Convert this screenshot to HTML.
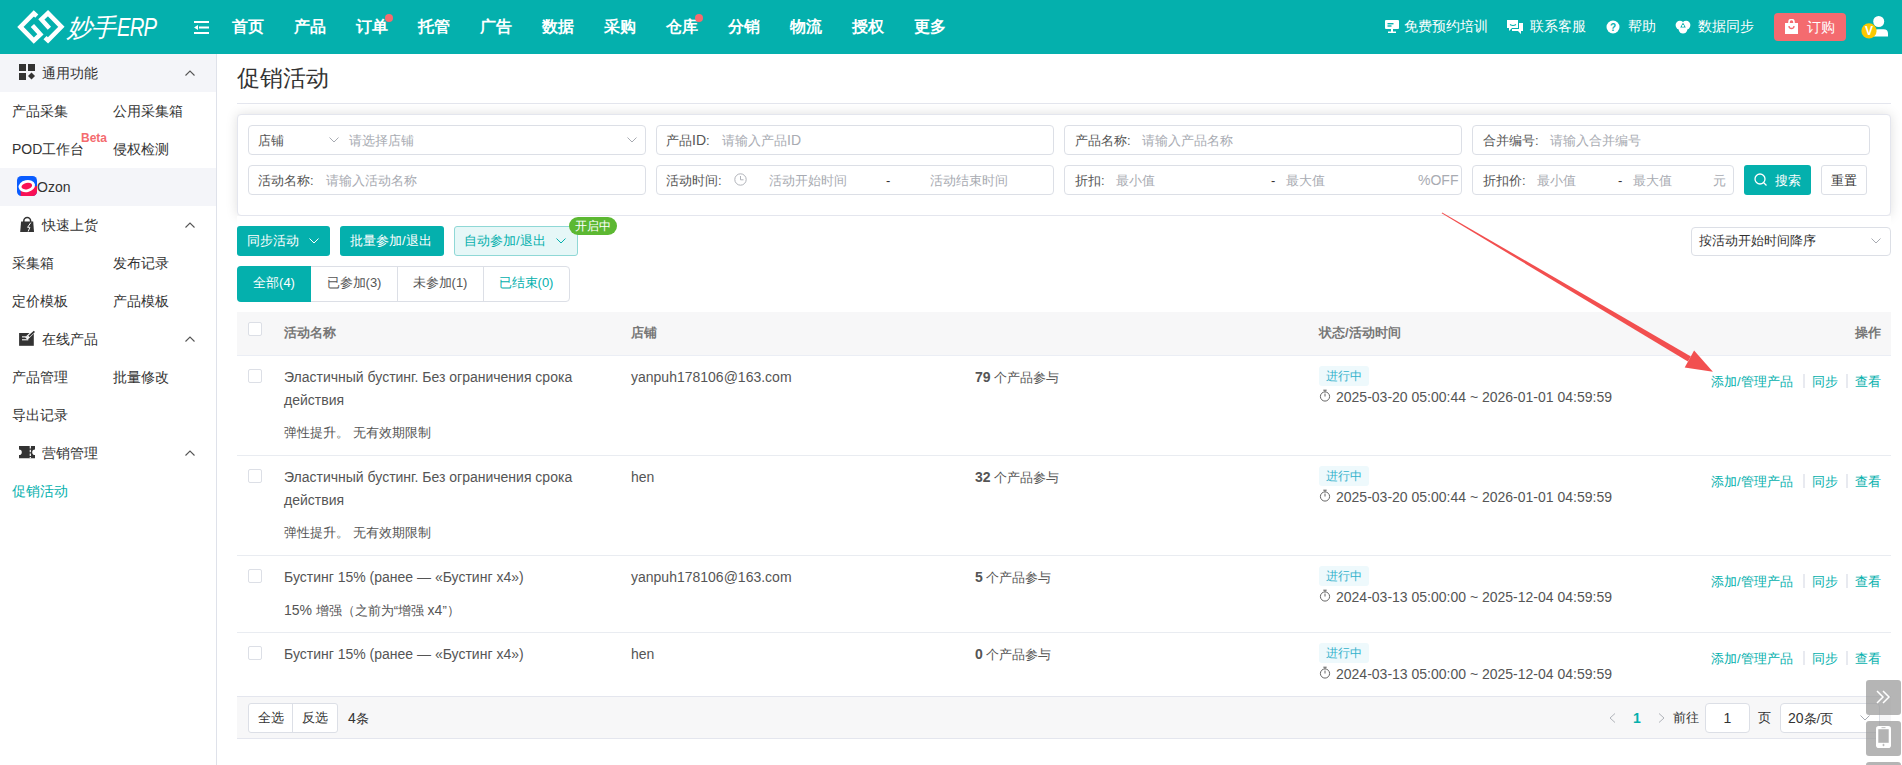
<!DOCTYPE html>
<html><head><meta charset="utf-8">
<style>
*{box-sizing:border-box;margin:0;padding:0}
html,body{width:1902px;height:765px;overflow:hidden;background:#fff}
body{position:relative;font-family:"Liberation Sans",sans-serif;font-size:13px;color:#333}
.a{position:absolute;white-space:nowrap}
body .L{font-size:14px}
#hdr{position:absolute;left:0;top:0;width:1902px;height:54px;background:#04b0ad}
.nav{position:absolute;top:1px;height:54px;line-height:52px;font-size:16px;font-weight:bold;color:#fff}
.dot{position:absolute;width:8px;height:8px;border-radius:50%;background:#f46b6f}
.hr{position:absolute;top:0;height:54px;line-height:53px;font-size:14px;color:#fff}
#side{position:absolute;left:0;top:54px;width:217px;height:711px;background:#fff;border-right:1px solid #dfe2ea}
.sec{position:absolute;left:0;width:216px;height:38px}
.gray{background:#f4f5f9}
.si{position:absolute;font-size:14px;line-height:38px;color:#333}
.chev{position:absolute;left:185px;width:10px;height:6px}
.inp{position:absolute;height:30px;border:1px solid #dcdfe6;border-radius:4px;background:#fff}
.lb{position:absolute;white-space:nowrap;line-height:31px;font-size:13px;color:#555}
.ph{position:absolute;white-space:nowrap;line-height:31px;font-size:13px;color:#a8abb2}
.chv{position:absolute;width:10px;height:6px;fill:none;stroke:#a8abb2;stroke-width:1}
.bt{position:absolute;white-space:nowrap;line-height:30px;font-size:13px}
.tb{position:absolute;top:266px;height:36px;line-height:34px;text-align:center;font-size:13px;color:#555}
.cb{position:absolute;width:14px;height:14px;border:1px solid #dcdfe6;border-radius:2px;background:#fff}
.th{position:absolute;top:311px;line-height:44px;font-size:13px;font-weight:bold;color:#777;white-space:nowrap}
.td{position:absolute;line-height:20px;font-size:13px;color:#555;white-space:nowrap}
.tag{position:absolute;width:50px;height:20px;line-height:20px;text-align:center;font-size:12px;color:#35b2cc;background:#eef9fc;border-radius:3px}
.op{position:absolute;line-height:21px;font-size:13px;color:#04b0ad;white-space:nowrap}
.sep{position:absolute;width:2px;height:14px;background:#e8eaf0}
</style></head><body>
<div id="hdr">
  <svg class="a" style="left:0;top:0" width="70" height="54" viewBox="0 0 70 54">
    <g fill="none" stroke="#fff" stroke-width="4.5" stroke-linejoin="miter" stroke-linecap="butt">
      <path id="lg" d="M36.8 16.2 L33.8 13.4 L20.4 26.9 L33.8 40.6 L40.4 34.3 L32.4 25.5"/>
      <path d="M36.8 16.2 L33.8 13.4 L20.4 26.9 L33.8 40.6 L40.4 34.3 L32.4 25.5" transform="rotate(180 40.9 26.87)"/>
    </g>
  </svg>
  <div class="a" style="left:67px;top:0;line-height:54px;font-size:25px;color:#fff;font-style:italic;letter-spacing:-1px">妙手<span style="font-size:26px;display:inline-block;margin-left:2px;transform:scaleX(0.78);transform-origin:0 50%">ERP</span></div>
  <svg class="a" style="left:194px;top:21px" width="16" height="14" viewBox="0 0 16 14">
    <g fill="#fff"><rect x="0" y="0" width="15" height="2"/><rect x="5" y="5.5" width="10" height="2"/><rect x="0" y="11" width="15" height="2"/><path d="M0 6.5 L4 4 L4 9 Z"/></g>
  </svg>
  <div class="nav" style="left:232px">首页</div>
  <div class="nav" style="left:294px">产品</div>
  <div class="nav" style="left:356px">订单</div><div class="dot" style="left:385px;top:14px"></div>
  <div class="nav" style="left:418px">托管</div>
  <div class="nav" style="left:480px">广告</div>
  <div class="nav" style="left:542px">数据</div>
  <div class="nav" style="left:604px">采购</div>
  <div class="nav" style="left:666px">仓库</div><div class="dot" style="left:695px;top:14px"></div>
  <div class="nav" style="left:728px">分销</div>
  <div class="nav" style="left:790px">物流</div>
  <div class="nav" style="left:852px">授权</div>
  <div class="nav" style="left:914px">更多</div>

  <!-- right header -->
  <svg class="a" style="left:1385px;top:20px" width="15" height="13" viewBox="0 0 15 13"><g fill="#fff"><rect x="0" y="0" width="14" height="9" rx="1"/><rect x="6" y="9" width="2" height="3"/><rect x="3" y="11.5" width="8" height="1.5"/></g><rect x="2.5" y="3" width="6" height="1.4" fill="#04b0ad"/><rect x="2.5" y="5.3" width="4" height="1.4" fill="#04b0ad"/></svg>
  <div class="hr" style="left:1404px">免费预约培训</div>
  <svg class="a" style="left:1507px;top:19px" width="16" height="15" viewBox="0 0 16 15"><g fill="#fff"><path d="M0 1 h11 v8 h-6 l-3 3 v-3 h-2z"/><path d="M12 4 h4 v8 h-2 v3 l-3 -3 h-6 v-2 h7z"/></g><path d="M3 5.5 q3 2 6 0" stroke="#04b0ad" stroke-width="1.2" fill="none"/></svg>
  <div class="hr" style="left:1530px">联系客服</div>
  <svg class="a" style="left:1606px;top:20px" width="14" height="14" viewBox="0 0 14 14"><circle cx="7" cy="7" r="6.5" fill="#fff"/><text x="7" y="11" font-size="10" font-weight="bold" text-anchor="middle" fill="#04b0ad" font-family="Liberation Sans">?</text></svg>
  <div class="hr" style="left:1628px">帮助</div>
  <svg class="a" style="left:1675px;top:19px" width="16" height="15" viewBox="0 0 16 15"><g fill="#fff"><circle cx="4.9" cy="6.1" r="4.3"/><circle cx="11.1" cy="6.1" r="4.3"/><circle cx="8" cy="10.3" r="4.3"/></g><path d="M8 3.6 L5.2 8.6 H10.8 Z" fill="#04b0ad"/><circle cx="8" cy="6.9" r="1.1" fill="#fff"/></svg>
  <div class="hr" style="left:1698px">数据同步</div>
  <div class="a" style="left:1774px;top:13px;width:72px;height:28px;border-radius:4px;background:#f46b6f"></div>
  <svg class="a" style="left:1785px;top:19px" width="13" height="15" viewBox="0 0 13 15"><path d="M0 4 h13 v11 h-13z" fill="#fff"/><path d="M4 6 v-3 a2.5 2.5 0 0 1 5 0 v3" stroke="#fff" stroke-width="1.6" fill="none"/><path d="M4 7 a2.5 2.5 0 0 0 5 0" stroke="#f46b6f" stroke-width="1.3" fill="none"/></svg>
  <div class="hr" style="left:1807px;top:1px">订购</div>
  <svg class="a" style="left:1858px;top:14px" width="34" height="28" viewBox="0 0 34 28"><circle cx="20.7" cy="7.5" r="5.5" fill="#fff"/><path d="M15.5 22.5 V19.5 Q15.5 15.2 20 15.2 H25.5 Q30 15.2 30 19.5 V22.5 Z" fill="#fff"/><circle cx="11" cy="16.9" r="7.6" fill="#fcc800"/><text x="11" y="21.3" font-size="12" font-weight="bold" text-anchor="middle" fill="#fff" font-family="Liberation Sans">V</text></svg>
</div>

<div id="side">
  <div class="sec gray" style="top:0"></div>
  <div class="sec gray" style="top:114px"></div>
  <!-- icons -->
  <svg class="a" style="left:19px;top:10px" width="16" height="16" viewBox="0 0 16 16"><g fill="#333"><rect x="0" y="0" width="7" height="7"/><rect x="9" y="0" width="7" height="7"/><rect x="0" y="9" width="7" height="7"/><path d="M12.5 8.5 L16 12 L12.5 15.5 L9 12Z"/></g></svg>
  <div class="si" style="left:42px;top:0">通用功能</div>
  <svg class="chev" style="top:16px" viewBox="0 0 10 6"><path d="M0.5 5.5 L5 1 L9.5 5.5" stroke="#555" stroke-width="1.1" fill="none"/></svg>
  <div class="si" style="left:12px;top:38px">产品采集</div>
  <div class="si" style="left:113px;top:38px">公用采集箱</div>
  <div class="si" style="left:12px;top:76px">POD工作台</div>
  <div class="a" style="left:81px;top:77px;font-size:12px;line-height:14px;font-weight:bold;color:#f46b6f">Beta</div>
  <div class="si" style="left:113px;top:76px">侵权检测</div>
  <svg class="a" style="left:17px;top:122px" width="20" height="20" viewBox="0 0 20 20"><rect x="0" y="0" width="20" height="20" rx="4.5" fill="#0a5cff"/><path d="M3.7 12.5 L20 10 L20 15.5 A4.5 4.5 0 0 1 15.5 20 L3.7 20 Z" fill="#f91155"/><ellipse cx="9.8" cy="10.1" rx="8.3" ry="6" transform="rotate(-12 9.8 10.1)" fill="#fff"/><ellipse cx="9.8" cy="10.1" rx="5.4" ry="3.2" transform="rotate(-12 9.8 10.1)" fill="#f91155"/></svg>
  <div class="si" style="left:37px;top:114px">Ozon</div>

  <svg class="a" style="left:20px;top:162px" width="15" height="17" viewBox="0 0 15 17"><path d="M3.8 6 V5 A3.4 3.4 0 0 1 10.6 5 V6" stroke="#333" stroke-width="1.5" fill="none"/><path d="M1.1 5.5 H13.2 L14 16 H0.2 Z" fill="#333"/><path d="M10.8 6.6 L7.6 11.3 H9.9 L8.2 15.5" stroke="#fff" stroke-width="1" fill="none"/></svg>
  <div class="si" style="left:42px;top:152px">快速上货</div>
  <svg class="chev" style="top:168px" viewBox="0 0 10 6"><path d="M0.5 5.5 L5 1 L9.5 5.5" stroke="#555" stroke-width="1.1" fill="none"/></svg>
  <div class="si" style="left:12px;top:190px">采集箱</div>
  <div class="si" style="left:113px;top:190px">发布记录</div>
  <div class="si" style="left:12px;top:228px">定价模板</div>
  <div class="si" style="left:113px;top:228px">产品模板</div>

  <svg class="a" style="left:19px;top:276px" width="17" height="17" viewBox="0 0 17 17"><rect x="0.1" y="3" width="14.7" height="12.8" fill="#333"/><path d="M7.3 8.5 L16.5 -0.5" stroke="#fff" stroke-width="3.4"/><path d="M9.9 6.4 L15.4 1.3" stroke="#333" stroke-width="1.8"/><rect x="3" y="6.2" width="6.5" height="1.3" fill="#ddd"/><rect x="3" y="9.1" width="6.3" height="1.3" fill="#ddd"/></svg>
  <div class="si" style="left:42px;top:266px">在线产品</div>
  <svg class="chev" style="top:282px" viewBox="0 0 10 6"><path d="M0.5 5.5 L5 1 L9.5 5.5" stroke="#555" stroke-width="1.1" fill="none"/></svg>
  <div class="si" style="left:12px;top:304px">产品管理</div>
  <div class="si" style="left:113px;top:304px">批量修改</div>
  <div class="si" style="left:12px;top:342px">导出记录</div>

  <svg class="a" style="left:19px;top:392px" width="16" height="13" viewBox="0 0 16 13"><path d="M0 0 H16 V3.4 A2.8 2.8 0 0 0 16 9 V12.3 H0 V9 A2.8 2.8 0 0 0 0 3.4 Z" fill="#333"/><path d="M11.3 0 V12.3" stroke="#fff" stroke-width="1.2" stroke-dasharray="2.6 1.1"/></svg>
  <div class="si" style="left:42px;top:380px">营销管理</div>
  <svg class="chev" style="top:396px" viewBox="0 0 10 6"><path d="M0.5 5.5 L5 1 L9.5 5.5" stroke="#555" stroke-width="1.1" fill="none"/></svg>
  <div class="si" style="left:12px;top:418px;color:#04b0ad">促销活动</div>
</div>

<div id="main">
  <div class="a" style="left:237px;top:62px;font-size:23px;line-height:32px;color:#333">促销活动</div>
  <div class="a" style="left:237px;top:103px;width:1654px;height:1px;background:#e4e6ee"></div>
  <!-- search card -->
  <div class="a" style="left:237px;top:114px;width:1654px;height:102px;border:1px solid #e4e6ee;border-radius:4px;background:#fff;box-shadow:0 0 12px rgba(0,0,0,0.13)"></div>
  <div class="a" style="left:237px;top:216px;width:1654px;height:95px;background:#fff"></div>
  <div class="inp" style="left:248px;top:125px;width:398px"></div>
  <div class="inp" style="left:656px;top:125px;width:398px"></div>
  <div class="inp" style="left:1064px;top:125px;width:398px"></div>
  <div class="inp" style="left:1472px;top:125px;width:398px"></div>
  <div class="inp" style="left:248px;top:165px;width:398px"></div>
  <div class="inp" style="left:656px;top:165px;width:398px"></div>
  <div class="inp" style="left:1064px;top:165px;width:398px"></div>
  <div class="inp" style="left:1472px;top:165px;width:262px"></div>
  <div class="lb" style="left:258px;top:125px">店铺</div>
  <svg class="chv" style="left:329px;top:137px"><path d="M0.5 0.5 L5 5 L9.5 0.5"/></svg>
  <div class="ph" style="left:349px;top:125px">请选择店铺</div>
  <svg class="chv" style="left:627px;top:137px"><path d="M0.5 0.5 L5 5 L9.5 0.5"/></svg>
  <div class="lb" style="left:666px;top:125px">产品<span class="L">ID</span>:</div>
  <div class="ph" style="left:722px;top:125px">请输入产品<span class="L">ID</span></div>
  <div class="lb" style="left:1075px;top:125px">产品名称:</div>
  <div class="ph" style="left:1142px;top:125px">请输入产品名称</div>
  <div class="lb" style="left:1483px;top:125px">合并编号:</div>
  <div class="ph" style="left:1550px;top:125px">请输入合并编号</div>
  <div class="lb" style="left:258px;top:165px">活动名称:</div>
  <div class="ph" style="left:326px;top:165px">请输入活动名称</div>
  <div class="lb" style="left:666px;top:165px">活动时间:</div>
  <svg class="a" style="left:734px;top:173px" width="13" height="13" viewBox="0 0 13 13"><circle cx="6.5" cy="6.5" r="5.7" fill="none" stroke="#b0b3b9" stroke-width="1"/><path d="M6.5 3 V6.8 H9.5" fill="none" stroke="#b0b3b9" stroke-width="1"/></svg>
  <div class="ph" style="left:769px;top:165px">活动开始时间</div>
  <div class="lb" style="left:886px;top:165px;color:#333">-</div>
  <div class="ph" style="left:930px;top:165px">活动结束时间</div>
  <div class="lb" style="left:1075px;top:165px">折扣:</div>
  <div class="ph" style="left:1116px;top:165px">最小值</div>
  <div class="lb" style="left:1271px;top:165px;color:#333">-</div>
  <div class="ph" style="left:1286px;top:165px">最大值</div>
  <div class="ph" style="left:1418px;top:165px"><span class="L">%OFF</span></div>
  <div class="lb" style="left:1483px;top:165px">折扣价:</div>
  <div class="ph" style="left:1537px;top:165px">最小值</div>
  <div class="lb" style="left:1618px;top:165px;color:#333">-</div>
  <div class="ph" style="left:1633px;top:165px">最大值</div>
  <div class="ph" style="left:1713px;top:165px">元</div>
  <div class="a" style="left:1744px;top:165px;width:67px;height:30px;border-radius:3px;background:#04b0ad"></div>
  <svg class="a" style="left:1754px;top:173px" width="14" height="14" viewBox="0 0 14 14"><circle cx="6" cy="6" r="5" fill="none" stroke="#fff" stroke-width="1.3"/><path d="M9.5 9.5 L12.5 12.5" stroke="#fff" stroke-width="1.3"/></svg>
  <div class="lb" style="left:1775px;top:165px;color:#fff">搜索</div>
  <div class="a" style="left:1821px;top:165px;width:46px;height:30px;border-radius:3px;border:1px solid #dcdfe6;background:#fff"></div>
  <div class="lb" style="left:1831px;top:165px;color:#333">重置</div>

  <!-- buttons -->
  <div class="a" style="left:237px;top:226px;width:93px;height:30px;border-radius:3px;background:#04b0ad"></div>
  <div class="bt" style="left:247px;top:226px;color:#fff">同步活动</div>
  <svg class="chv" style="left:309px;top:238px;stroke:#fff"><path d="M0.5 0.5 L5 5 L9.5 0.5"/></svg>
  <div class="a" style="left:340px;top:226px;width:104px;height:30px;border-radius:3px;background:#04b0ad"></div>
  <div class="bt" style="left:350px;top:226px;color:#fff">批量参加/退出</div>
  <div class="a" style="left:454px;top:226px;width:124px;height:30px;border-radius:3px;background:#e6f7f7;border:1px solid #8fd8d6"></div>
  <div class="bt" style="left:464px;top:226px;color:#04b0ad">自动参加/退出</div>
  <svg class="chv" style="left:556px;top:238px;stroke:#04b0ad"><path d="M0.5 0.5 L5 5 L9.5 0.5"/></svg>
  <div class="a" style="left:569px;top:217px;width:48px;height:18px;border-radius:9px;background:#5cb832;color:#fff;font-size:12px;line-height:18px;text-align:center">开启中</div>
  <div class="a" style="left:1691px;top:227px;width:200px;height:29px;border-radius:4px;border:1px solid #dcdfe6"></div>
  <div class="bt" style="left:1699px;top:226px;color:#333">按活动开始时间降序</div>
  <svg class="chv" style="left:1871px;top:238px"><path d="M0.5 0.5 L5 5 L9.5 0.5"/></svg>

  <!-- tabs -->
  <div class="a" style="left:237px;top:266px;width:333px;height:36px;border:1px solid #dcdfe6;border-radius:4px"></div>
  <div class="a" style="left:237px;top:266px;width:74px;height:36px;background:#04b0ad;border-radius:4px 0 0 4px"></div>
  <div class="a" style="left:397px;top:266px;width:1px;height:36px;background:#dcdfe6"></div>
  <div class="a" style="left:483px;top:266px;width:1px;height:36px;background:#dcdfe6"></div>
  <div class="tb" style="left:237px;width:74px;color:#fff">全部(4)</div>
  <div class="tb" style="left:311px;width:86px">已参加(3)</div>
  <div class="tb" style="left:397px;width:86px">未参加(1)</div>
  <div class="tb" style="left:483px;width:86px;color:#04b0ad">已结束(0)</div>

  <!-- table -->
  <div class="a" style="left:237px;top:312px;width:1654px;height:44px;background:#f7f7f8;border-bottom:1px solid #ebeef5"></div>
  <div class="cb" style="left:248px;top:322px"></div>
  <div class="th" style="left:284px">活动名称</div>
  <div class="th" style="left:631px">店铺</div>
  <div class="th" style="left:1319px">状态/活动时间</div>
  <div class="th" style="left:1855px">操作</div>
  <div class="a" style="left:237px;top:455px;width:1654px;height:1px;background:#e9ecf1"></div>
  <div class="cb" style="left:248px;top:369px"></div>
  <div class="td L" style="left:284px;top:367px">Эластичный бустинг. Без ограничения срока</div>
  <div class="td L" style="left:284px;top:390px">действия</div>
  <div class="td" style="left:284px;top:423px">弹性提升。 无有效期限制</div>
  <div class="td L" style="left:631px;top:367px">yanpuh178106@163.com</div>
  <div class="td" style="left:975px;top:367px"><b class="L">79</b> 个产品参与</div>
  <div class="tag" style="left:1319px;top:366px">进行中</div>
  <svg class="a" style="left:1319px;top:389px" width="12" height="13" viewBox="0 0 12 13"><circle cx="6" cy="7.5" r="4.6" fill="none" stroke="#666" stroke-width="1"/><path d="M4.3 1.2 H7.7 M6 1.2 V2.9 M6 7.5 V4.6" stroke="#666" stroke-width="1"/></svg>
  <div class="td L" style="left:1336px;top:387px">2025-03-20 05:00:44 ~ 2026-01-01 04:59:59</div>
  <div class="op" style="left:1711px;top:371px">添加/管理产品</div><div class="sep" style="left:1803px;top:374px"></div><div class="op" style="left:1812px;top:371px">同步</div><div class="sep" style="left:1846px;top:374px"></div><div class="op" style="left:1855px;top:371px">查看</div>
  <div class="a" style="left:237px;top:555px;width:1654px;height:1px;background:#e9ecf1"></div>
  <div class="cb" style="left:248px;top:469px"></div>
  <div class="td L" style="left:284px;top:467px">Эластичный бустинг. Без ограничения срока</div>
  <div class="td L" style="left:284px;top:490px">действия</div>
  <div class="td" style="left:284px;top:523px">弹性提升。 无有效期限制</div>
  <div class="td L" style="left:631px;top:467px">hen</div>
  <div class="td" style="left:975px;top:467px"><b class="L">32</b> 个产品参与</div>
  <div class="tag" style="left:1319px;top:466px">进行中</div>
  <svg class="a" style="left:1319px;top:489px" width="12" height="13" viewBox="0 0 12 13"><circle cx="6" cy="7.5" r="4.6" fill="none" stroke="#666" stroke-width="1"/><path d="M4.3 1.2 H7.7 M6 1.2 V2.9 M6 7.5 V4.6" stroke="#666" stroke-width="1"/></svg>
  <div class="td L" style="left:1336px;top:487px">2025-03-20 05:00:44 ~ 2026-01-01 04:59:59</div>
  <div class="op" style="left:1711px;top:471px">添加/管理产品</div><div class="sep" style="left:1803px;top:474px"></div><div class="op" style="left:1812px;top:471px">同步</div><div class="sep" style="left:1846px;top:474px"></div><div class="op" style="left:1855px;top:471px">查看</div>
  <div class="a" style="left:237px;top:632px;width:1654px;height:1px;background:#e9ecf1"></div>
  <div class="cb" style="left:248px;top:569px"></div>
  <div class="td L" style="left:284px;top:567px">Бустинг 15% (ранее — «Бустинг x4»)</div>
  <div class="td" style="left:284px;top:600px"><span class="L">15%</span> 增强（之前为“增强 <span class="L">x4</span>”）</div>
  <div class="td L" style="left:631px;top:567px">yanpuh178106@163.com</div>
  <div class="td" style="left:975px;top:567px"><b class="L">5</b> 个产品参与</div>
  <div class="tag" style="left:1319px;top:566px">进行中</div>
  <svg class="a" style="left:1319px;top:589px" width="12" height="13" viewBox="0 0 12 13"><circle cx="6" cy="7.5" r="4.6" fill="none" stroke="#666" stroke-width="1"/><path d="M4.3 1.2 H7.7 M6 1.2 V2.9 M6 7.5 V4.6" stroke="#666" stroke-width="1"/></svg>
  <div class="td L" style="left:1336px;top:587px">2024-03-13 05:00:00 ~ 2025-12-04 04:59:59</div>
  <div class="op" style="left:1711px;top:571px">添加/管理产品</div><div class="sep" style="left:1803px;top:574px"></div><div class="op" style="left:1812px;top:571px">同步</div><div class="sep" style="left:1846px;top:574px"></div><div class="op" style="left:1855px;top:571px">查看</div>
  <div class="a" style="left:237px;top:696px;width:1654px;height:1px;background:#e9ecf1"></div>
  <div class="cb" style="left:248px;top:646px"></div>
  <div class="td L" style="left:284px;top:644px">Бустинг 15% (ранее — «Бустинг x4»)</div>
  <div class="td L" style="left:631px;top:644px">hen</div>
  <div class="td" style="left:975px;top:644px"><b class="L">0</b> 个产品参与</div>
  <div class="tag" style="left:1319px;top:643px">进行中</div>
  <svg class="a" style="left:1319px;top:666px" width="12" height="13" viewBox="0 0 12 13"><circle cx="6" cy="7.5" r="4.6" fill="none" stroke="#666" stroke-width="1"/><path d="M4.3 1.2 H7.7 M6 1.2 V2.9 M6 7.5 V4.6" stroke="#666" stroke-width="1"/></svg>
  <div class="td L" style="left:1336px;top:664px">2024-03-13 05:00:00 ~ 2025-12-04 04:59:59</div>
  <div class="op" style="left:1711px;top:648px">添加/管理产品</div><div class="sep" style="left:1803px;top:651px"></div><div class="op" style="left:1812px;top:648px">同步</div><div class="sep" style="left:1846px;top:651px"></div><div class="op" style="left:1855px;top:648px">查看</div>

  <!-- footer -->
  <div class="a" style="left:237px;top:696px;width:1654px;height:43px;background:#f7f7f8;border-top:1px solid #e4e6ee;border-bottom:1px solid #e4e6ee"></div>
  <div class="a" style="left:248px;top:703px;width:90px;height:30px;border:1px solid #dcdfe6;border-radius:3px;background:#fff"></div>
  <div class="a" style="left:292px;top:703px;width:1px;height:30px;background:#dcdfe6"></div>
  <div class="bt" style="left:258px;top:703px">全选</div>
  <div class="bt" style="left:302px;top:703px">反选</div>
  <div class="bt" style="left:348px;top:703px"><span class="L">4</span>条</div>
  <svg class="a" style="left:1609px;top:713px" width="7" height="10" viewBox="0 0 7 10"><path d="M6 0.5 L1 5 L6 9.5" fill="none" stroke="#b0b3b9" stroke-width="1"/></svg>
  <div class="bt" style="left:1633px;top:703px;color:#04b0ad;font-weight:bold"><span class="L">1</span></div>
  <svg class="a" style="left:1658px;top:713px" width="7" height="10" viewBox="0 0 7 10"><path d="M1 0.5 L6 5 L1 9.5" fill="none" stroke="#b0b3b9" stroke-width="1"/></svg>
  <div class="bt" style="left:1673px;top:703px">前往</div>
  <div class="a" style="left:1705px;top:703px;width:45px;height:30px;border:1px solid #dcdfe6;border-radius:4px;background:#fff;text-align:center;line-height:28px"><span class="L">1</span></div>
  <div class="bt" style="left:1758px;top:703px">页</div>
  <div class="a" style="left:1780px;top:703px;width:100px;height:30px;border:1px solid #dcdfe6;border-radius:4px;background:#fff"></div>
  <div class="bt" style="left:1788px;top:703px"><span class="L">20</span>条/页</div>
  <svg class="chv" style="left:1860px;top:715px"><path d="M0.5 0.5 L5 5 L9.5 0.5"/></svg>
</div>
<svg class="a" style="left:0;top:0" width="1902" height="765" viewBox="0 0 1902 765">
  <path d="M1441.65 213.33 L1442.15 212.47 L1690.92 356.41 L1687.88 361.59 Z" fill="#f24f4f"/>
  <path d="M1712.9 371.8 L1694.1 350.6 L1689.4 359 L1684.7 367.5 Z" fill="#f24f4f"/>
</svg>
<div class="a" style="left:1866px;top:680px;width:35px;height:35px;border-radius:3px;background:rgba(150,150,150,0.7)"></div>
<div class="a" style="left:1866px;top:721px;width:35px;height:35px;border-radius:3px;background:rgba(150,150,150,0.7)"></div>
<div class="a" style="left:1866px;top:762px;width:35px;height:35px;border-radius:3px;background:rgba(150,150,150,0.7)"></div>
<svg class="a" style="left:1875px;top:690px" width="16" height="14" viewBox="0 0 16 14"><path d="M2 1 L8 7 L2 13 M8 1 L14 7 L8 13" fill="none" stroke="#fff" stroke-width="1.5"/></svg>
<svg class="a" style="left:1876px;top:726px" width="15" height="22" viewBox="0 0 15 22"><rect x="0" y="0" width="15" height="22" rx="2.8" fill="#fff"/><rect x="2.3" y="3.2" width="10.4" height="13.6" fill="#b3b3b3"/><rect x="5.5" y="1.3" width="4" height="0.8" fill="#b3b3b3"/><path d="M7.5 17.8 V20.2 M6.3 19 H8.7" stroke="#b3b3b3" stroke-width="0.8"/></svg>
</body></html>
